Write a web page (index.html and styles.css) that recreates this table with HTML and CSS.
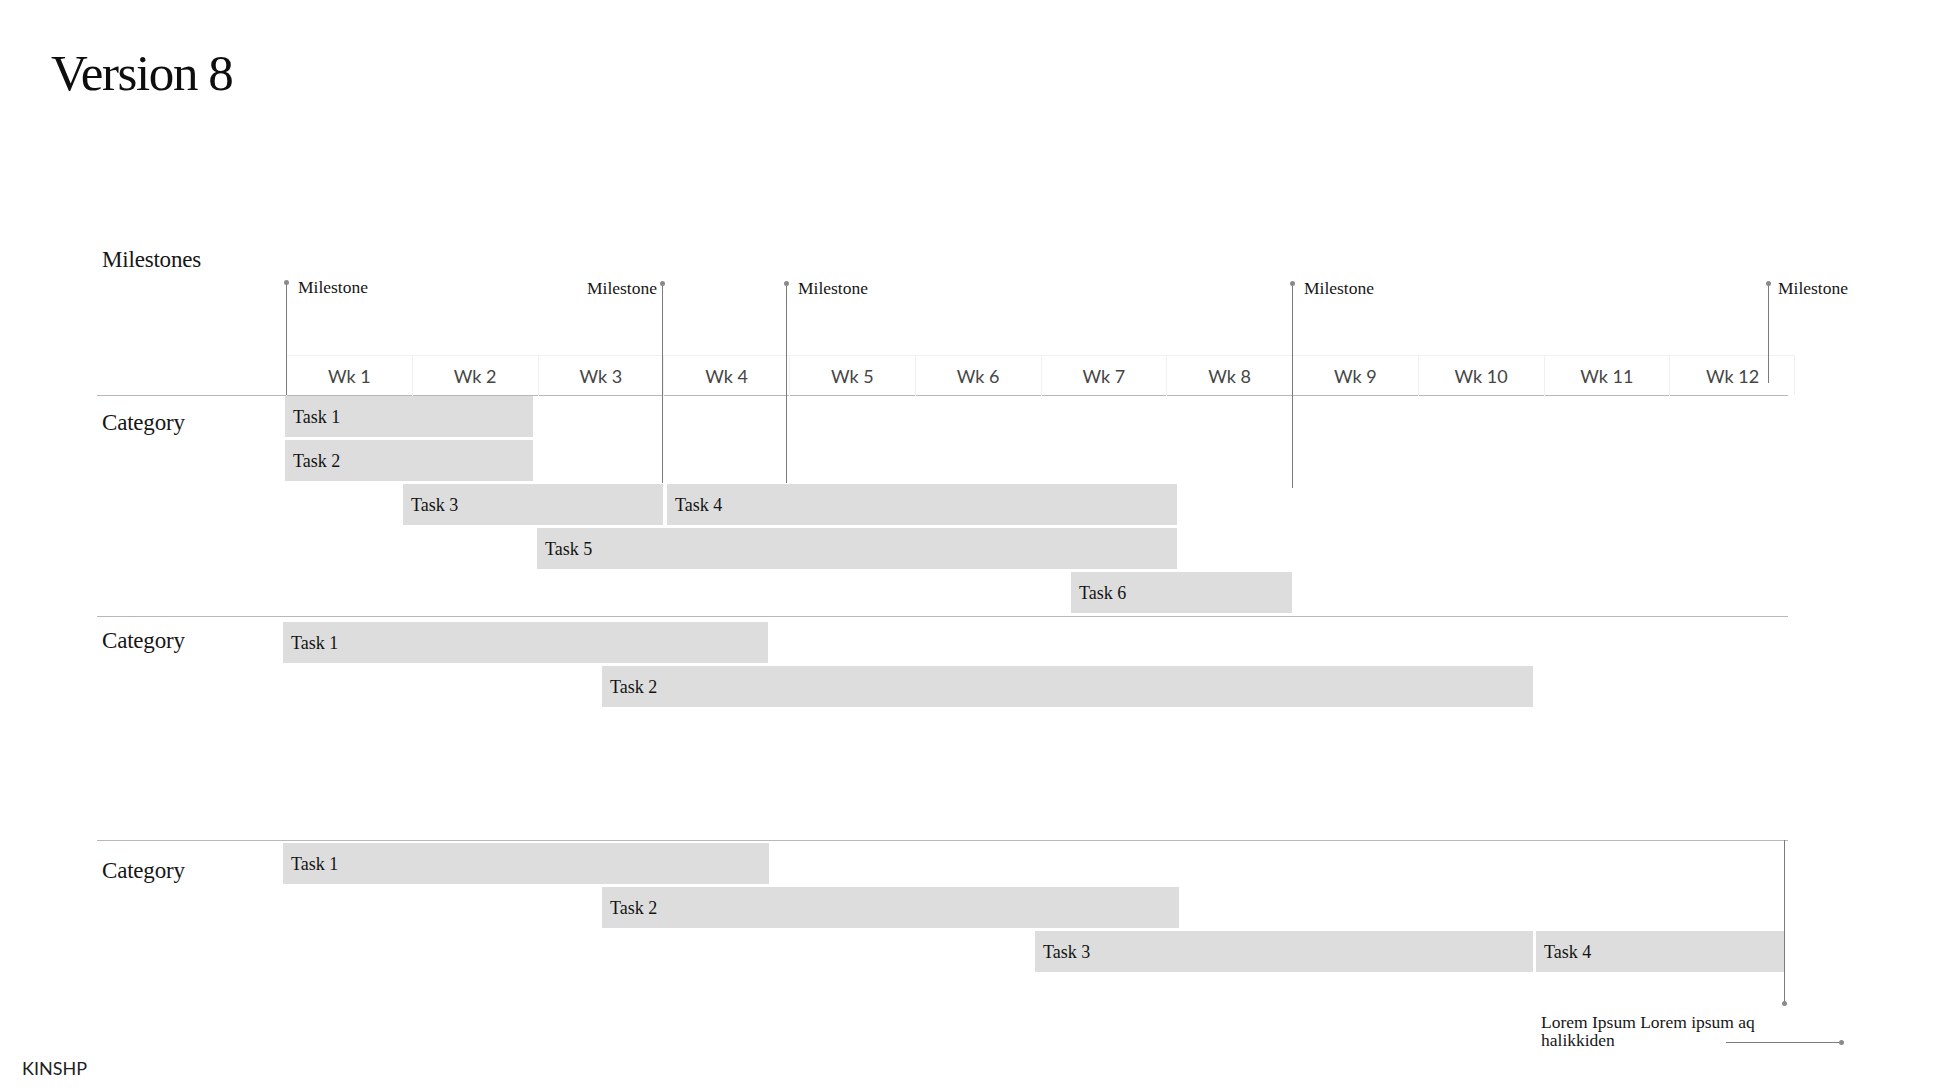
FILE: index.html
```html
<!DOCTYPE html>
<html lang="en">
<head>
<meta charset="utf-8">
<title>Version 8</title>
<link rel="stylesheet" href="styles.css">
</head>
<body>
<div class="page">
  <h1 class="title">Version 8</h1>

  <div class="chart">
    <div class="ms-row">
      <div class="ms-label">Milestones</div>
    </div>

    <div class="weeks-row">
      <div class="weeks">
        <div class="wk">Wk 1</div>
        <div class="wk">Wk 2</div>
        <div class="wk">Wk 3</div>
        <div class="wk">Wk 4</div>
        <div class="wk">Wk 5</div>
        <div class="wk">Wk 6</div>
        <div class="wk">Wk 7</div>
        <div class="wk">Wk 8</div>
        <div class="wk">Wk 9</div>
        <div class="wk">Wk 10</div>
        <div class="wk">Wk 11</div>
        <div class="wk">Wk 12</div>
      </div>
    </div>

    <section class="cat">
      <div class="cat-label cat-label-1">Category</div>
      <div class="tasks tasks-1">
        <div class="trow"><div class="bar" style="margin-left:0;width:248px">Task 1</div></div>
        <div class="trow"><div class="bar" style="margin-left:0;width:248px">Task 2</div></div>
        <div class="trow">
          <div class="bar" style="margin-left:118px;width:260px">Task 3</div>
          <div class="bar" style="margin-left:4px;width:510px">Task 4</div>
        </div>
        <div class="trow"><div class="bar" style="margin-left:252px;width:640px">Task 5</div></div>
        <div class="trow"><div class="bar" style="margin-left:786px;width:221px">Task 6</div></div>
      </div>
    </section>

    <section class="cat">
      <div class="cat-label cat-label-2">Category</div>
      <div class="tasks tasks-2">
        <div class="trow"><div class="bar" style="margin-left:-2px;width:485px">Task 1</div></div>
        <div class="trow"><div class="bar" style="margin-left:317px;width:931px">Task 2</div></div>
      </div>
    </section>

    <section class="cat">
      <div class="cat-label cat-label-3">Category</div>
      <div class="tasks tasks-3">
        <div class="trow"><div class="bar" style="margin-left:-2px;width:486px">Task 1</div></div>
        <div class="trow"><div class="bar" style="margin-left:317px;width:577px">Task 2</div></div>
        <div class="trow">
          <div class="bar" style="margin-left:750px;width:498px">Task 3</div>
          <div class="bar" style="margin-left:3px;width:248px">Task 4</div>
        </div>
      </div>
    </section>

    <div class="ms" style="left:189px;top:34px;height:113px"><span class="ms-text">Milestone</span></div>
    <div class="ms ms-left" style="left:565px;top:35px;height:200px"><span class="ms-text">Milestone</span></div>
    <div class="ms" style="left:689px;top:35px;height:200px"><span class="ms-text">Milestone</span></div>
    <div class="ms" style="left:1195px;top:35px;height:205px"><span class="ms-text">Milestone</span></div>
    <div class="ms ms-tight" style="left:1671px;top:35px;height:100px"><span class="ms-text">Milestone</span></div>

    <div class="note-v" style="left:1687px;top:592px;height:163px"></div>
    <div class="note-text" style="left:1444px;top:765px">Lorem Ipsum Lorem ipsum aq halikkiden</div>
    <div class="note-h" style="left:1629px;top:794px;width:115px"></div>
  </div>

  <footer class="brand">KINSHP</footer>
</div>
</body>
</html>
```

FILE: styles.css
```css
* {
  box-sizing: border-box;
}

html, body {
  margin: 0;
  padding: 0;
  background: #ffffff;
}

body {
  font-family: "Liberation Serif", "Times New Roman", serif;
  color: #161616;
}

.page {
  width: 1948px;
  height: 1088px;
  overflow: hidden;
  display: flex;
  flex-direction: column;
  padding-top: 48px;
}

.title {
  margin: 0 0 0 51px;
  font-family: "Liberation Serif", "Times New Roman", serif;
  font-weight: 400;
  font-size: 51px;
  line-height: 50px;
  letter-spacing: -1.4px;
  color: #0e0e0e;
}

.chart {
  position: relative;
  margin-top: 150px;
  margin-left: 97px;
  width: 1698px;
}

.ms-row {
  height: 107px;
}

.ms-label {
  padding-left: 5px;
  font-size: 23px;
  line-height: 23px;
  letter-spacing: -0.2px;
}

.weeks-row {
  padding-left: 189px;
}

.weeks {
  display: grid;
  grid-template-columns: repeat(12, 125.75px);
  height: 40px;
  border-top: 1px solid #f1f1f1;
  border-right: 1px solid #f1f1f1;
}

.wk {
  border-left: 1px solid #f1f1f1;
  padding-top: 1px;
  text-align: center;
  font-family: Lato, "Open Sans", sans-serif;
  font-size: 18px;
  line-height: 39px;
  color: #454545;
}

.cat {
  display: flex;
  width: 1691px;
  border-top: 1px solid #b8b8b8;
}

.cat-label {
  width: 188px;
  flex-shrink: 0;
  padding-left: 5px;
  font-size: 23px;
  line-height: 23px;
  letter-spacing: -0.2px;
}

.cat-label-1 { padding-top: 15px; }
.cat-label-2 { padding-top: 12px; }
.cat-label-3 { padding-top: 18px; }

.tasks {
  display: flex;
  flex-direction: column;
  gap: 3px;
}

.tasks-1 { padding-bottom: 3px; }
.tasks-2 { padding-top: 5px; padding-bottom: 133px; }
.tasks-3 { padding-top: 2px; }

.trow {
  display: flex;
  height: 41px;
}

.bar {
  flex-shrink: 0;
  height: 41px;
  padding-left: 8px;
  background: #dddddd;
  font-size: 18px;
  line-height: 42px;
  white-space: nowrap;
  color: #141414;
}

.ms {
  position: absolute;
  width: 1px;
  background: #7b7b7b;
}

.ms::before {
  content: "";
  position: absolute;
  left: -2px;
  top: -2px;
  width: 5px;
  height: 5px;
  border-radius: 50%;
  background: #8a8a8a;
}

.ms-text {
  position: absolute;
  top: -3px;
  left: 12px;
  font-size: 17.5px;
  line-height: 17px;
  white-space: nowrap;
  color: #161616;
}

.ms-left .ms-text {
  left: auto;
  right: 6px;
}

.ms-tight .ms-text {
  left: 10px;
}

.note-v {
  position: absolute;
  width: 1px;
  background: #7b7b7b;
}

.note-v::after {
  content: "";
  position: absolute;
  left: -2px;
  bottom: -3px;
  width: 5px;
  height: 5px;
  border-radius: 50%;
  background: #8a8a8a;
}

.note-h {
  position: absolute;
  height: 1px;
  background: #7b7b7b;
}

.note-h::after {
  content: "";
  position: absolute;
  right: -3px;
  top: -2px;
  width: 5px;
  height: 5px;
  border-radius: 50%;
  background: #8a8a8a;
}

.note-text {
  position: absolute;
  width: 230px;
  font-size: 17.5px;
  line-height: 18px;
  color: #161616;
}

.brand {
  margin-top: auto;
  padding: 0 0 11px 22px;
  font-family: Lato, "Open Sans", sans-serif;
  font-size: 18px;
  line-height: 18px;
  color: #1e1e1e;
}
```
